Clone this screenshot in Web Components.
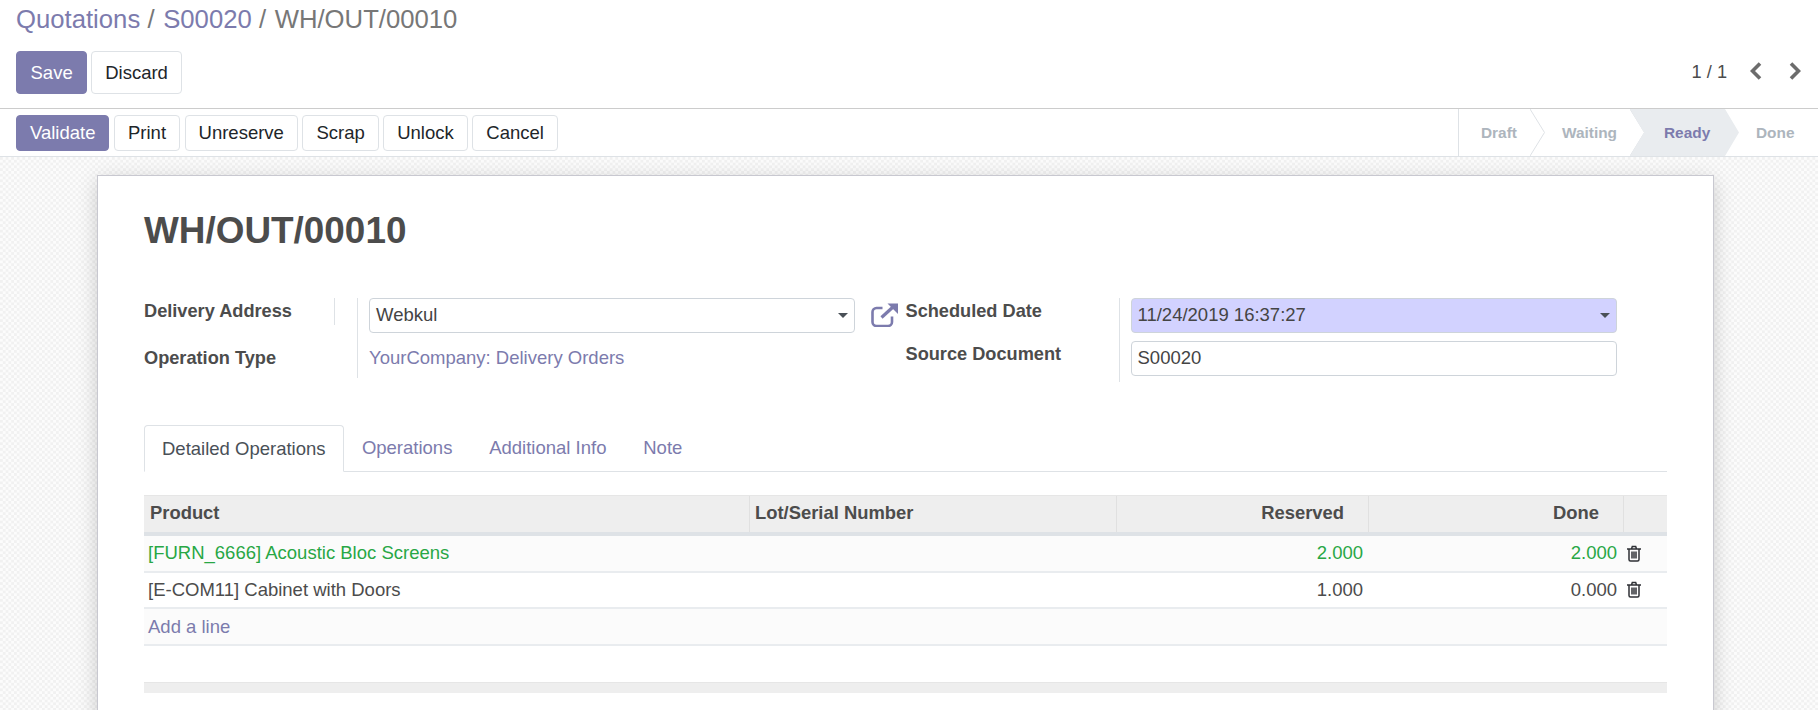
<!DOCTYPE html>
<html lang="en">
<head>
<meta charset="utf-8">
<title>WH/OUT/00010</title>
<style>
  html, body { margin: 0; height: 100%; overflow: hidden; background: #fff; }
  body {
    font-family: "Liberation Sans", Arial, sans-serif;
    font-size: 18.5px;
    line-height: 1.5;
    color: #4c4c4c;
    display: flex;
    flex-direction: column;
  }
</style>
</head>
<body>
  <o-control-panel>
    <a slot="crumbs" href="#">Quotations</a>
    <a slot="crumbs" href="#">S00020</a>
    <span slot="crumbs">WH/OUT/00010</span>
    <o-button slot="actions" primary tall>Save</o-button>
    <o-button slot="actions" tall>Discard</o-button>
    <span slot="pager">1 / 1</span>
  </o-control-panel>

  <o-statusbar>
    <o-button slot="buttons" primary>Validate</o-button>
    <o-button slot="buttons">Print</o-button>
    <o-button slot="buttons">Unreserve</o-button>
    <o-button slot="buttons">Scrap</o-button>
    <o-button slot="buttons">Unlock</o-button>
    <o-button slot="buttons">Cancel</o-button>
    <o-stage slot="stages" style="--w:71px;--pad:22px" arrow>Draft</o-stage>
    <o-stage slot="stages" style="--w:100px" arrow>Waiting</o-stage>
    <o-stage slot="stages" style="--w:95px;--pad:34px" active>Ready</o-stage>
    <o-stage slot="stages" style="--w:93px;--pad:31px">Done</o-stage>
  </o-statusbar>

  <o-sheet-area>
    <o-sheet>
      <o-title>WH/OUT/00010</o-title>
      <o-form-row>
        <o-field-group style="--value-width:497px;--row2:37px">
          <o-label divider>Delivery Address</o-label>
          <o-value><o-input select>Webkul</o-input></o-value>
          <o-label style="--nudge:3.5px">Operation Type</o-label>
          <o-value><a style="color:#7c7bad;text-decoration:none" href="#">YourCompany: Delivery Orders</a></o-value>
        </o-field-group>
        <o-open-icon></o-open-icon>
        <o-field-group style="--value-width:497px;--row2:41px">
          <o-label>Scheduled Date</o-label>
          <o-value><o-input select required>11/24/2019 16:37:27</o-input></o-value>
          <o-label>Source Document</o-label>
          <o-value><o-input>S00020</o-input></o-value>
        </o-field-group>
      </o-form-row>
      <o-tabs>
        <o-tab active>Detailed Operations</o-tab>
        <o-tab>Operations</o-tab>
        <o-tab>Additional Info</o-tab>
        <o-tab>Note</o-tab>
      </o-tabs>
      <o-op-table></o-op-table>
    </o-sheet>
  </o-sheet-area>

<script>
const define = (name, css, html) => {
  customElements.define(name, class extends HTMLElement {
    connectedCallback() {
      if (this.shadowRoot) return;
      const shadow = this.attachShadow({ mode: 'open' });
      shadow.innerHTML = `<style>${css}</style>${html}`;
    }
  });
};

define('o-button', `
  :host {
    display: inline-flex;
    align-items: center;
    box-sizing: border-box;
    height: 36px;
    padding: 0 13px;
    background: #fff;
    color: #212529;
    border: 1px solid #dee2e6;
    border-radius: 4px;
    white-space: nowrap;
  }
  :host([tall]) { height: 43px; }
  :host([tall][primary]) { padding: 0 13.5px; }
  :host([primary]) { background: #7c7bad; border-color: #7c7bad; color: #fff; }
`, '<slot></slot>');

define('o-control-panel', `
  :host {
    display: block;
    flex: none;
    height: 109px;
    box-sizing: border-box;
    background: #fff;
    border-bottom: 1px solid #ccc;
  }
  #crumbs { display: flex; height: 51px; padding-left: 16px; box-sizing: border-box; align-items: flex-start; font-size: 25.7px; line-height: 38px; color: #777; }
  ::slotted(a) { color: #7c7bad; text-decoration: none; }
  ::slotted(a)::after { content: "\\00a0/\\00a0"; color: #777; padding-right: 1.5px; }
  #bar { display: flex; justify-content: space-between; align-items: center; padding: 0 17px 0 16px; }
  #actions { display: flex; gap: 4px; }
  #pager { display: flex; align-items: center; color: #4c4c4c; font-size: 18.2px; }
  svg { display: block; fill: none; stroke: #6c6c6c; stroke-width: 3.6; }
  #prev { margin-left: 23px; position: relative; top: -1px; }
  #next { margin-left: 27px; position: relative; top: -1px; }
`, `
  <div id="crumbs"><slot name="crumbs"></slot></div>
  <div id="bar">
    <div id="actions"><slot name="actions"></slot></div>
    <div id="pager">
      <slot name="pager"></slot>
      <svg id="prev" width="12" height="18" viewBox="0 0 12 18"><path d="M10 1.5 2.5 9l7.5 7.5"/></svg>
      <svg id="next" width="12" height="18" viewBox="0 0 12 18"><path d="M2 1.5 9.5 9 2 16.5"/></svg>
    </div>
  </div>
`);

define('o-statusbar', `
  :host {
    display: flex;
    flex: none;
    justify-content: space-between;
    box-sizing: border-box;
    height: 48px;
    background: #fff;
    border-bottom: 1px solid #dee2e6;
  }
  #buttons { display: flex; align-items: center; gap: 4.5px; padding-left: 16px; }
  #stages { display: flex; border-left: 1px solid #dee2e6; }
`, `
  <div id="buttons"><slot name="buttons"></slot></div>
  <div id="stages"><slot name="stages"></slot></div>
`);

define('o-stage', `
  :host {
    display: flex;
    position: relative;
    align-items: center;
    box-sizing: border-box;
    width: var(--w);
    padding-left: var(--pad, 32px);
    font-size: 15.4px;
    font-weight: bold;
    color: #adb5bd;
    white-space: nowrap;
  }
  :host([active]) { color: #7c7bad; }
  :host([active])::before {
    content: "";
    position: absolute;
    inset: 0 -14px 0 0;
    background: #e9ecef;
    clip-path: polygon(0 0, calc(100% - 14px) 0, 100% 50%, calc(100% - 14px) 100%, 0 100%, 14px 50%);
  }
  span { position: relative; }
  svg { display: none; position: absolute; left: 100%; top: 0; fill: none; stroke: #dee2e6; }
  :host([arrow]) svg { display: block; }
`, `
  <span><slot></slot></span>
  <svg width="15" height="47" viewBox="0 0 15 47"><path d="M0 0 14.5 23.5 0 47"/></svg>
`);

define('o-sheet-area', `
  :host {
    display: block;
    flex: 1;
    min-height: 0;
    overflow: hidden;
    padding: 18px 104px 0 97px;
    background-color: #f7f7f7;
    background-image: conic-gradient(#fcfcfc 25%, #f1f1f1 0 50%, #fcfcfc 0 75%, #f1f1f1 0);
    background-size: 5.6px 5.6px;
  }
`, '<slot></slot>');

define('o-sheet', `
  :host {
    display: block;
    box-sizing: border-box;
    height: 700px;
    padding: 33px 46px 0 46px;
    background: #fff;
    border: 1px solid #c8c8d0;
    box-shadow: 0 5px 20px -1px rgba(0, 0, 0, .2);
  }
`, '<slot></slot>');

define('o-title', `
  :host {
    display: block;
    font-size: 36.9px;
    font-weight: bold;
    line-height: 44px;
    color: #4c4c4c;
    margin-bottom: 45px;
  }
`, '<slot></slot>');

define('o-form-row', `
  :host { display: flex; align-items: flex-start; height: 127px; }
`, '<slot></slot>');

define('o-field-group', `
  :host {
    display: grid;
    grid-template-columns: 214px var(--value-width);
    grid-template-rows: 43px var(--row2);
    flex: none;
  }
`, '<slot></slot>');

define('o-label', `
  :host {
    display: block;
    position: relative;
    box-sizing: border-box;
    padding-top: var(--nudge, 0);
    font-weight: bold;
    font-size: 18.2px;
    line-height: 27px;
    color: #4c4c4c;
    border-right: 1px solid #dee2e6;
    white-space: nowrap;
  }
  :host([divider])::after {
    content: "";
    position: absolute;
    right: 22px;
    top: 0;
    width: 1px;
    height: 27px;
    background: #dee2e6;
  }
`, '<slot></slot>');

define('o-value', `
  :host { display: block; padding-left: 11px; line-height: 34px; white-space: nowrap; }
`, '<slot></slot>');

define('o-input', `
  :host {
    display: flex;
    align-items: center;
    justify-content: space-between;
    box-sizing: border-box;
    width: 486px;
    height: 35px;
    padding: 0 6px;
    color: #444;
    background: #fff;
    border: 1px solid #ced4da;
    border-radius: 4px;
    line-height: 1;
  }
  :host([required]) { background: #d2d2ff; }
  i { display: none; width: 0; height: 0; border: 5px solid transparent; border-top-color: #495057; border-bottom: 0; }
  :host([select]) i { display: block; }
`, '<span><slot></slot></span><i></i>');

define('o-open-icon', `
  :host { display: block; flex: none; width: 36px; height: 24px; margin: 5px 0 0 14.5px; }
  svg { display: block; }
`, `
  <svg width="30" height="24" viewBox="0 0 30 24" role="img" aria-label="Open">
    <path d="M12.5 5H6.5a4 4 0 0 0-4 4v10a4 4 0 0 0 4 4H18a4 4 0 0 0 4-4v-5.5" fill="none" stroke="#7c7bad" stroke-width="2.6"/>
    <path d="M11.5 14.5 23 4" fill="none" stroke="#7c7bad" stroke-width="3.2"/>
    <path d="M17.5.5H28V11z" fill="#7c7bad"/>
  </svg>
`);

define('o-tabs', `
  :host {
    display: flex;
    box-sizing: border-box;
    height: 47px;
    border-bottom: 1px solid #dee2e6;
    margin-bottom: 23px;
  }
`, '<slot></slot>');

define('o-tab', `
  :host {
    display: flex;
    align-items: center;
    box-sizing: border-box;
    height: 46px;
    padding: 0 18.4px;
    color: #7c7bad;
    white-space: nowrap;
  }
  :host([active]) {
    height: 47px;
    padding: 0 17px;
    color: #495057;
    background: #fff;
    border: 1px solid #dee2e6;
    border-bottom-color: #fff;
    border-radius: 4px 4px 0 0;
  }
`, '<slot></slot>');

const COLS = '605px 367px 252px 255px 44px';
const TRASH = `<svg width="16" height="17" viewBox="0 0 16 17" role="img" aria-label="Delete">
  <path d="M1 4h14M3 4v10.5a1.5 1.5 0 0 0 1.5 1.5h7a1.5 1.5 0 0 0 1.5-1.5V4M5.5 4l.8-2.4h3.4L10.5 4M6 6.500v7M8 6.500v7M10 6.500v7" fill="none" stroke="#2f3136" stroke-width="1.5"/>
</svg>`;

define('o-op-table', `
  :host { display: block; color: #4c4c4c; line-height: 1; }
  .row { display: grid; grid-template-columns: ${COLS}; align-items: center; box-sizing: border-box; height: 36.5px; border-bottom: 2px solid #e9ecef; white-space: nowrap; }
  .row > div { padding: 0 6px 0 4px; }
  .row > .res { padding-right: 5px; }
  .odd { background: #fbfbfb; }
  .head { height: 41px; align-items: stretch; background: #eee; border-top: 1px solid #e6e6e6; border-bottom: 4px solid #dee2e6; font-weight: bold; font-size: 18.4px; }
  .row.head > div { display: flex; align-items: center; padding: 0 0 2px 5px; border-left: 1px solid #e0e0e0; }
  .row.head > div:first-child { border-left: 0; padding-left: 6px; }
  .row.head > .num { justify-content: flex-end; padding-right: 24px; }
  .num { text-align: right; }
  .ok { color: #28a745; }
  a { display: block; padding-top: 1px; color: #7c7bad; text-decoration: none; }
  svg { display: block; margin-left: -1px; }
  .foot { height: 10px; background: #eee; border-top: 1px solid #e6e6e6; }
  .gap { height: 36px; }
`, `
  <div class="row head">
    <div>Product</div><div>Lot/Serial Number</div><div class="num">Reserved</div><div class="num">Done</div><div></div>
  </div>
  <div class="row odd ok">
    <div>[FURN_6666] Acoustic Bloc Screens</div><div></div><div class="num res">2.000</div><div class="num">2.000</div><div>${TRASH}</div>
  </div>
  <div class="row">
    <div>[E-COM11] Cabinet with Doors</div><div></div><div class="num res">1.000</div><div class="num">0.000</div><div>${TRASH}</div>
  </div>
  <div class="row odd">
    <div><a href="#">Add a line</a></div><div></div><div></div><div></div><div></div>
  </div>
  <div class="gap"></div>
  <div class="foot"></div>
`);
</script>
</body>
</html>
